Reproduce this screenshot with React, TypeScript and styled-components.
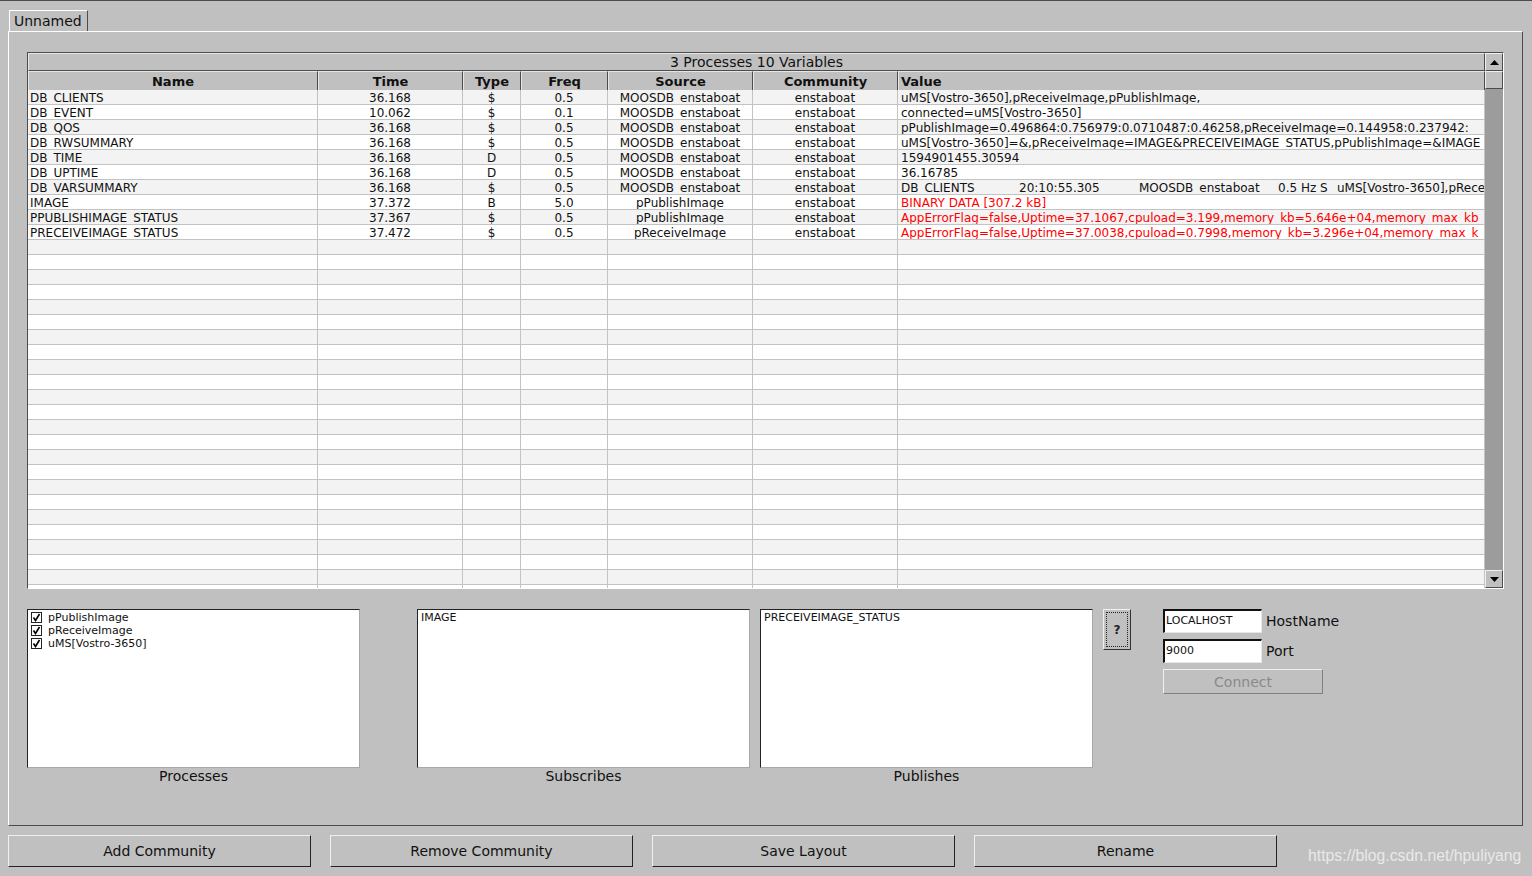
import React from 'react';
import styled, { createGlobalStyle } from 'styled-components';

const GlobalStyle = createGlobalStyle`
    html, body {
        margin: 0;
        padding: 0;
        background: #c0c0c0;
    }
    body {
        font-family: 'DejaVu Sans', Verdana, sans-serif;
        color: #000;
        overflow: hidden;
    }
`;

const Window = styled.div`
    width: 1532px;
    height: 876px;
    box-sizing: border-box;
    border-top: 1px solid #4c4c4c;
    padding: 9px 10px 0 8px;
    display: flex;
    flex-direction: column;
`;

const TabBar = styled.div`
    display: flex;
    padding-left: 1px;
`;

const Tab = styled.div`
    height: 21px;
    width: 79px;
    box-sizing: border-box;
    border-top: 1px solid #fff;
    border-left: 1px solid #fff;
    border-right: 1px solid #4c4c4c;
    padding-left: 4px;
    font-size: 14px;
    line-height: 20px;
    color: #111;
`;

const TabPanel = styled.div`
    width: 1515px;
    height: 795px;
    box-sizing: border-box;
    border-top: 1px solid #fff;
    border-left: 1px solid #fff;
    border-right: 1px solid #4c4c4c;
    border-bottom: 1px solid #4c4c4c;
    padding: 20px 18px 0 18px;
    display: flex;
    flex-direction: column;
`;

const TableFrame = styled.div`
    width: 1477px;
    height: 537px;
    box-sizing: border-box;
    border-top: 1px solid #4c4c4c;
    border-left: 1px solid #4c4c4c;
    border-right: 1px solid #fff;
    border-bottom: 1px solid #fff;
    display: flex;
    background: #fff;
`;

const TableMain = styled.div`
    width: 1457px;
    display: flex;
    flex-direction: column;
    overflow: hidden;
`;

const TitleBar = styled.div`
    height: 18px;
    box-sizing: border-box;
    background: #c0c0c0;
    border-top: 1px solid #e6e6e6;
    border-left: 1px solid #e6e6e6;
    border-right: 1px solid #4c4c4c;
    border-bottom: 1px solid #4c4c4c;
    text-align: center;
    font-size: 14px;
    line-height: 17px;
    color: #111;
`;

const COLS = '290px 145px 58px 87px 145px 145px 587px';

const HeaderRow = styled.div`
    display: grid;
    grid-template-columns: ${COLS};
    height: 19px;
`;

const HeaderCell = styled.div<{ $left?: boolean }>`
    box-sizing: border-box;
    background: #c0c0c0;
    border-top: 1px solid #e6e6e6;
    border-left: 1px solid #e6e6e6;
    border-right: 1px solid #4c4c4c;
    border-bottom: 1px solid #4c4c4c;
    font-size: 13px;
    font-weight: bold;
    padding-top: 1px;
    line-height: 17px;
    text-align: ${(p) => (p.$left ? 'left' : 'center')};
    padding-left: ${(p) => (p.$left ? '2px' : '0')};
    color: #111;
`;

const Body = styled.div`
    flex: 1;
    overflow: hidden;
`;

const Row = styled.div<{ $odd: boolean }>`
    display: grid;
    grid-template-columns: ${COLS};
    height: 15px;
    background: ${(p) => (p.$odd ? '#f3f3f3' : '#fff')};
`;

const Cell = styled.div<{ $align?: 'left' | 'center'; $red?: boolean; $pad?: number }>`
    box-sizing: border-box;
    border-right: 1px solid #c3c3c3;
    border-bottom: 1px solid #c3c3c3;
    font-size: 12px;
    padding-top: 1px;
    line-height: 14px;
    white-space: pre;
    overflow: hidden;
    text-align: ${(p) => p.$align ?? 'center'};
    padding-left: ${(p) => p.$pad ?? 0}px;
    color: ${(p) => (p.$red ? '#f00' : '#111')};
`;

const Seg = styled.span<{ $w: number }>`
    display: inline-block;
    width: ${(p) => p.$w}px;
`;

const ScrollBar = styled.div`
    width: 18px;
    display: flex;
    flex-direction: column;
    background: #9c9c9c;
`;

const ScrollButton = styled.div`
    height: 18px;
    box-sizing: border-box;
    background: #c0c0c0;
    border-top: 1px solid #f0f0f0;
    border-left: 1px solid #f0f0f0;
    border-right: 1px solid #4c4c4c;
    border-bottom: 1px solid #4c4c4c;
    display: flex;
    align-items: center;
    justify-content: center;
`;

const Track = styled.div`
    flex: 1;
`;

const LowerArea = styled.div`
    display: flex;
    margin-top: 20px;
    align-items: flex-start;
`;

const ListGroup = styled.div<{ $ml: number }>`
    margin-left: ${(p) => p.$ml}px;
    display: flex;
    flex-direction: column;
    align-items: center;
`;

const ListBox = styled.div`
    width: 333px;
    height: 159px;
    box-sizing: border-box;
    background: #fff;
    border-top: 1px solid #222;
    border-left: 1px solid #222;
    border-right: 1px solid #a8a8a8;
    border-bottom: 1px solid #a8a8a8;
    padding: 1px 3px;
    align-self: stretch;
`;

const ListItem = styled.div`
    display: flex;
    align-items: center;
    height: 13px;
    font-size: 11px;
    line-height: 13px;
    color: #111;
`;

const Check = styled.span`
    width: 11px;
    height: 11px;
    box-sizing: border-box;
    border: 1px solid #222;
    background: #fff;
    margin-right: 6px;
    display: flex;
    align-items: center;
    justify-content: center;
`;

const ListLabel = styled.div`
    font-size: 14px;
    line-height: 17px;
    color: #111;
`;

const HelpButton = styled.div`
    margin-left: 10px;
    width: 28px;
    height: 41px;
    box-sizing: border-box;
    background: #c0c0c0;
    border-top: 1px solid #f0f0f0;
    border-left: 1px solid #f0f0f0;
    border-right: 1px solid #333;
    border-bottom: 1px solid #333;
    padding: 2px;
    display: flex;
`;

const FocusRing = styled.div`
    flex: 1;
    border: 1px dotted #222;
    display: flex;
    align-items: center;
    justify-content: center;
    font-size: 12px;
    font-weight: bold;
    color: #222;
`;

const ConnectForm = styled.div`
    margin-left: 32px;
    display: flex;
    flex-direction: column;
    gap: 6px;
`;

const FieldRow = styled.div`
    display: flex;
    align-items: center;
    gap: 4px;
`;

const Input = styled.div`
    width: 99px;
    height: 24px;
    box-sizing: border-box;
    background: #fff;
    border-top: 2px solid #111;
    border-left: 2px solid #111;
    border-right: 1px solid #e6e6e6;
    border-bottom: 1px solid #e6e6e6;
    padding-left: 1px;
    font-size: 11px;
    line-height: 20px;
    color: #111;
`;

const FieldLabel = styled.div`
    font-size: 14px;
    color: #111;
`;

const Button = styled.div<{ $w: number; $h: number; $disabled?: boolean }>`
    flex-shrink: 0;
    width: ${(p) => p.$w}px;
    height: ${(p) => p.$h}px;
    box-sizing: border-box;
    background: #c0c0c0;
    border-top: 1px solid #f0f0f0;
    border-left: 1px solid #f0f0f0;
    border-right: 1px solid ${(p) => (p.$disabled ? '#808080' : '#222')};
    border-bottom: 1px solid ${(p) => (p.$disabled ? '#808080' : '#222')};
    display: flex;
    align-items: center;
    justify-content: center;
    font-size: 14px;
    color: ${(p) => (p.$disabled ? '#8a8a8a' : '#111')};
`;

const BottomBar = styled.div`
    display: flex;
    align-items: flex-start;
    gap: 19px;
    margin-top: 9px;
`;

const Watermark = styled.div`
    margin-left: 12px;
    margin-top: 12px;
    font-family: 'Liberation Sans', Arial, sans-serif;
    font-size: 15.8px;
    color: #e9e9e9;
    white-space: nowrap;
`;

const Arrow = ({ down }: { down?: boolean }) => (
    <svg width="9" height="5" viewBox="0 0 9 5">
        <polygon points={down ? '0,0 9,0 4.5,5' : '0,5 9,5 4.5,0'} fill="#000" />
    </svg>
);

const Tick = () => (
    <svg width="9" height="9" viewBox="0 0 9 9">
        <path d="M1.5 4.5 L3.5 7.5 L7.5 1" stroke="#000" strokeWidth="1.6" fill="none" />
    </svg>
);

type Var = {
    name: string;
    time: string;
    type: string;
    freq: string;
    source: string;
    community: string;
    value: React.ReactNode;
    red?: boolean;
};

const vars: Var[] = [
    { name: 'DB_CLIENTS', time: '36.168', type: '$', freq: '0.5', source: 'MOOSDB_enstaboat', community: 'enstaboat', value: 'uMS[Vostro-3650],pReceiveImage,pPublishImage,' },
    { name: 'DB_EVENT', time: '10.062', type: '$', freq: '0.1', source: 'MOOSDB_enstaboat', community: 'enstaboat', value: 'connected=uMS[Vostro-3650]' },
    { name: 'DB_QOS', time: '36.168', type: '$', freq: '0.5', source: 'MOOSDB_enstaboat', community: 'enstaboat', value: 'pPublishImage=0.496864:0.756979:0.0710487:0.46258,pReceiveImage=0.144958:0.237942:' },
    { name: 'DB_RWSUMMARY', time: '36.168', type: '$', freq: '0.5', source: 'MOOSDB_enstaboat', community: 'enstaboat', value: 'uMS[Vostro-3650]=&,pReceiveImage=IMAGE&PRECEIVEIMAGE_STATUS,pPublishImage=&IMAGE' },
    { name: 'DB_TIME', time: '36.168', type: 'D', freq: '0.5', source: 'MOOSDB_enstaboat', community: 'enstaboat', value: '1594901455.30594' },
    { name: 'DB_UPTIME', time: '36.168', type: 'D', freq: '0.5', source: 'MOOSDB_enstaboat', community: 'enstaboat', value: '36.16785' },
    {
        name: 'DB_VARSUMMARY', time: '36.168', type: '$', freq: '0.5', source: 'MOOSDB_enstaboat', community: 'enstaboat',
        value: (
            <>
                <Seg $w={118}>DB_CLIENTS</Seg>
                <Seg $w={120}>20:10:55.305</Seg>
                <Seg $w={139}>MOOSDB_enstaboat</Seg>
                <Seg $w={59}>0.5 Hz S</Seg>
                uMS[Vostro-3650],pRece
            </>
        ),
    },
    { name: 'IMAGE', time: '37.372', type: 'B', freq: '5.0', source: 'pPublishImage', community: 'enstaboat', value: 'BINARY DATA [307.2 kB]', red: true },
    { name: 'PPUBLISHIMAGE_STATUS', time: '37.367', type: '$', freq: '0.5', source: 'pPublishImage', community: 'enstaboat', value: 'AppErrorFlag=false,Uptime=37.1067,cpuload=3.199,memory_kb=5.646e+04,memory_max_kb', red: true },
    { name: 'PRECEIVEIMAGE_STATUS', time: '37.472', type: '$', freq: '0.5', source: 'pReceiveImage', community: 'enstaboat', value: 'AppErrorFlag=false,Uptime=37.0038,cpuload=0.7998,memory_kb=3.296e+04,memory_max_k', red: true },
];

const TOTAL_ROWS = 34;

const headers = ['Name', 'Time', 'Type', 'Freq', 'Source', 'Community', 'Value'];

const processes = ['pPublishImage', 'pReceiveImage', 'uMS[Vostro-3650]'];

function App() {
    const rows = Array.from({ length: TOTAL_ROWS }, (_, i) => vars[i]);

    return (
        <Window>
            <GlobalStyle />
            <TabBar>
                <Tab>Unnamed</Tab>
            </TabBar>
            <TabPanel>
                <TableFrame>
                    <TableMain>
                        <TitleBar>3 Processes 10 Variables</TitleBar>
                        <HeaderRow>
                            {headers.map((h) => (
                                <HeaderCell key={h} $left={h === 'Value'}>
                                    {h}
                                </HeaderCell>
                            ))}
                        </HeaderRow>
                        <Body>
                            {rows.map((v, i) => (
                                <Row key={i} $odd={i % 2 === 0}>
                                    <Cell $align="left" $pad={2}>{v?.name}</Cell>
                                    <Cell>{v?.time}</Cell>
                                    <Cell>{v?.type}</Cell>
                                    <Cell>{v?.freq}</Cell>
                                    <Cell>{v?.source}</Cell>
                                    <Cell>{v?.community}</Cell>
                                    <Cell $align="left" $pad={3} $red={v?.red}>
                                        {v?.value}
                                    </Cell>
                                </Row>
                            ))}
                        </Body>
                    </TableMain>
                    <ScrollBar>
                        <ScrollButton>
                            <Arrow />
                        </ScrollButton>
                        <ScrollButton />
                        <Track />
                        <ScrollButton>
                            <Arrow down />
                        </ScrollButton>
                    </ScrollBar>
                </TableFrame>

                <LowerArea>
                    <ListGroup $ml={0}>
                        <ListBox>
                            {processes.map((p) => (
                                <ListItem key={p}>
                                    <Check>
                                        <Tick />
                                    </Check>
                                    {p}
                                </ListItem>
                            ))}
                        </ListBox>
                        <ListLabel>Processes</ListLabel>
                    </ListGroup>
                    <ListGroup $ml={57}>
                        <ListBox>
                            <ListItem>IMAGE</ListItem>
                        </ListBox>
                        <ListLabel>Subscribes</ListLabel>
                    </ListGroup>
                    <ListGroup $ml={10}>
                        <ListBox>
                            <ListItem>PRECEIVEIMAGE_STATUS</ListItem>
                        </ListBox>
                        <ListLabel>Publishes</ListLabel>
                    </ListGroup>
                    <HelpButton>
                        <FocusRing>?</FocusRing>
                    </HelpButton>
                    <ConnectForm>
                        <FieldRow>
                            <Input>LOCALHOST</Input>
                            <FieldLabel>HostName</FieldLabel>
                        </FieldRow>
                        <FieldRow>
                            <Input>9000</Input>
                            <FieldLabel>Port</FieldLabel>
                        </FieldRow>
                        <Button $w={160} $h={25} $disabled>
                            Connect
                        </Button>
                    </ConnectForm>
                </LowerArea>
            </TabPanel>
            <BottomBar>
                <Button $w={303} $h={32}>Add Community</Button>
                <Button $w={303} $h={32}>Remove Community</Button>
                <Button $w={303} $h={32}>Save Layout</Button>
                <Button $w={303} $h={32}>Rename</Button>
                <Watermark>https://blog.csdn.net/hpuliyang</Watermark>
            </BottomBar>
        </Window>
    );
}

export default App;
